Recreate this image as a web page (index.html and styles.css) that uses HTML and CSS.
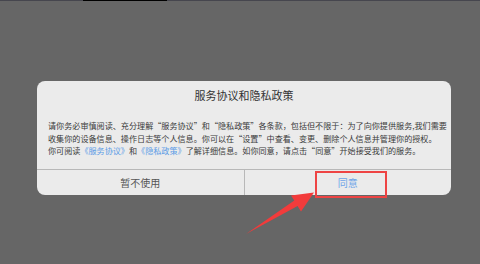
FILE: index.html
```html
<!DOCTYPE html>
<html lang="zh-CN">
<head>
  <meta charset="UTF-8">
  <meta name="viewport" content="width=device-width, initial-scale=1.0">
  <title>服务协议和隐私政策</title>
  <link rel="stylesheet" href="styles.css">
</head>
<body>
  <div class="statusbar"><div class="statusbar__notch"></div></div>

  <div class="dialog">
    <div class="dialog__title">服务协议和隐私政策</div>
    <p class="dialog__body">
      请你务必审慎阅读、充分理解“服务协议”和“隐私政策”各条款，包括但不限于：为了向你提供服务,我们需要<br>
      收集你的设备信息、操作日志等个人信息。你可以在“设置”中查看、变更、删除个人信息并管理你的授权。<br>
      你可阅读<a href="#">《服务协议》</a>和<a href="#">《隐私政策》</a>了解详细信息。如你同意，请点击“同意”开始接受我们的服务。
    </p>
    <div class="dialog__actions">
      <button class="dialog__btn">暂不使用</button>
      <button class="dialog__btn dialog__btn--primary">同意<span class="mark"></span></button>
    </div>
  </div>

  <!-- 标注箭头 -->
  <svg class="arrow" width="480" height="264" viewBox="0 0 480 264">
    <polygon points="246,234 294.3,200.6 291,195.4 314,192.5 301,211.4 297.6,206" fill="#f23b3b"/>
  </svg>
</body>
</html>
```

FILE: styles.css
```css
body {
  margin: 0;
  width: 480px;
  height: 264px;
  overflow: hidden;
  background-color: #666666;
  font-family: "Noto Sans CJK SC", "Noto Sans", sans-serif;
}

.statusbar {
  height: 1px;
  background-color: #46464e;
}
.statusbar__notch {
  margin-left: 83px;
  width: 84px;
  height: 1px;
  background-color: #000;
}

.dialog {
  margin: 80px 0 0 37px;
  width: 414px;
  background-color: #ebebeb;
  border-radius: 8px;
}
.dialog__title {
  padding: 7px 0 18px;
  text-align: center;
  font-size: 11px;
  line-height: 14px;
  color: #333;
}
.dialog__body {
  margin: 0;
  padding: 0 0 11px 11px;
  font-size: 8.1px;
  line-height: 12.5px;
  color: #3a3a3a;
  white-space: nowrap;
}
.dialog__body a {
  color: #5b9ce6;
  text-decoration: none;
}

.dialog__actions {
  display: flex;
  height: 25px;
  border-top: 1px solid #b8b8b8;
}
.dialog__btn {
  flex: 1;
  position: relative;
  padding: 0;
  border: 0;
  background: none;
  font: inherit;
  font-size: 10px;
  color: #555;
}
.dialog__btn + .dialog__btn {
  border-left: 1px solid #b8b8b8;
}
.dialog__btn--primary {
  color: #6ea5e8;
}

/* 红色标注框 */
.mark {
  position: absolute;
  left: 70px;
  top: 1px;
  width: 68px;
  height: 23px;
  border: 2px solid #ee4444;
}

.arrow {
  position: absolute;
  left: 0;
  top: 0;
}
```
